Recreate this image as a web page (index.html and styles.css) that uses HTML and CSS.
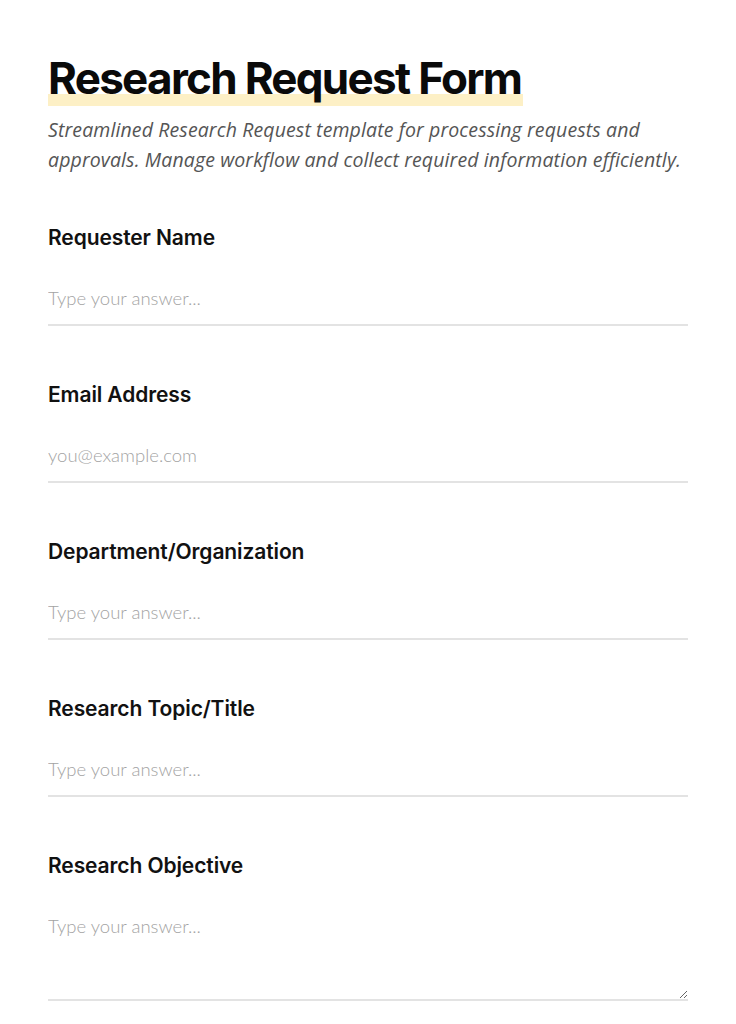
FILE: index.html
```html
<!DOCTYPE html>
<html lang="en">
<head>
<meta charset="utf-8">
<title>Research Request Form</title>
<link rel="stylesheet" href="styles.css">
</head>
<body>
<main class="page">
  <header class="head">
    <h1 class="title"><span class="title-text">Research Request Form</span></h1>
    <p class="subtitle">Streamlined Research Request template for processing requests and approvals. Manage workflow and collect required information efficiently.</p>
  </header>
  <form class="form">
    <div class="field">
      <label class="label" for="f1">Requester Name</label>
      <input class="input" id="f1" type="text" placeholder="Type your answer...">
    </div>
    <div class="field">
      <label class="label" for="f2">Email Address</label>
      <input class="input" id="f2" type="email" placeholder="you@example.com">
    </div>
    <div class="field">
      <label class="label" for="f3">Department/Organization</label>
      <input class="input" id="f3" type="text" placeholder="Type your answer...">
    </div>
    <div class="field">
      <label class="label" for="f4">Research Topic/Title</label>
      <input class="input" id="f4" type="text" placeholder="Type your answer...">
    </div>
    <div class="field">
      <label class="label" for="f5">Research Objective</label>
      <textarea class="input textarea" id="f5" placeholder="Type your answer..."></textarea>
    </div>
  </form>
</main>
</body>
</html>
```
FILE: styles.css
```css
* { box-sizing: border-box; }
html, body { margin: 0; padding: 0; background: #ffffff; }
body { font-family: Inter, "Liberation Sans", sans-serif; color: #111; }
.page { padding: 51px 48px 0 48px; }
.head { margin-bottom: 49px; }
.title { margin: 0; font-size: 44px; line-height: 54px; font-weight: 700; letter-spacing: -1.7px; color: #0a0a0a; }
.title-text { display: inline-block; position: relative; isolation: isolate; padding-right: 2px; }
.title-text::after { content: ""; position: absolute; left: 0; right: 0; bottom: -1px; height: 12px; background: #fdf0c6; z-index: -1; }
.subtitle { margin: 10px 0 0 0; font-family: "Open Sans", sans-serif; font-style: italic; font-size: 19.5px; line-height: 30px; color: #555; font-weight: 400; letter-spacing: 0.12px; }
.form { display: flex; flex-direction: column; gap: 55px; }
.field { display: flex; flex-direction: column; gap: 21px; }
.label { font-size: 21px; line-height: 28px; font-weight: 600; color: #111; letter-spacing: -0.1px; }
.input { width: 100%; border: none; border-bottom: 2px solid #e3e3e3; padding: 13px 0 14px 0; font-family: Lato, sans-serif; font-size: 18.5px; line-height: 24px; font-weight: 300; color: #111; background: transparent; outline: none; }
.input::placeholder { color: #a3a3a3; }
.textarea { height: 100px; resize: vertical; display: block; }
```
